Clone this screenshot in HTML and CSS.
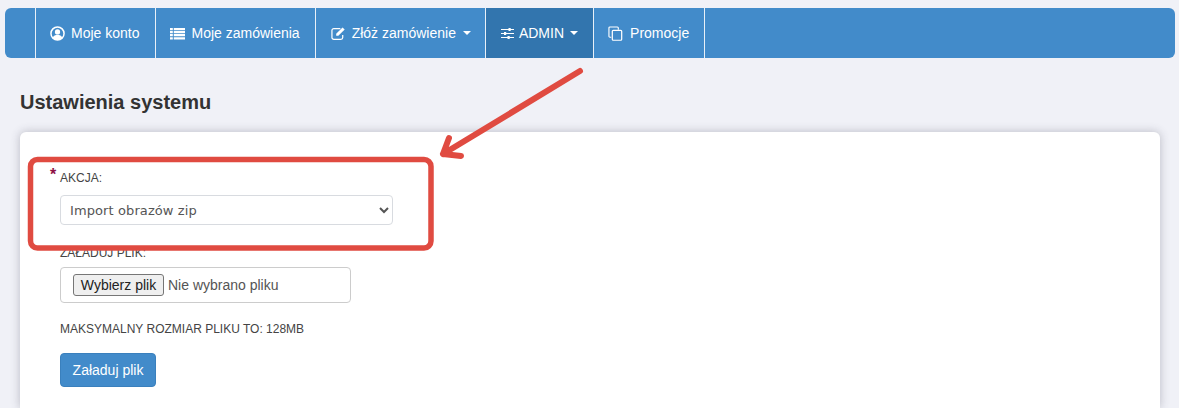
FILE: index.html
```html
<!DOCTYPE html>
<html lang="pl">
<head>
    <meta charset="UTF-8">
    <meta name="viewport" content="width=device-width, initial-scale=1.0">
    <title>Ustawienia systemu</title>
    <link rel="stylesheet" href="styles.css">
</head>
<body>
    <!-- Menu -->
    <nav class="navbar">
        <a class="nav-item nav-item-account" href="#">
            <svg class="icon" viewBox="0 0 16 16"><circle cx="8" cy="8" r="7" fill="none" stroke="#fff" stroke-width="1.600"/><circle cx="8" cy="6.300" r="2.800" fill="#fff"/><path d="M3 12.600c.7-2.300 2.800-3.200 5-3.200s4.300.9 5 3.200c-1.200 1.400-3 2.200-5 2.200s-3.800-.8-5-2.200z" fill="#fff"/></svg>
            Moje konto
        </a>
        <a class="nav-item" href="#">
            <svg class="icon" viewBox="0 0 16 16"><path d="M0 2h3v2.400H0zM4 2h12v2.400H4zM0 5.300h3v2.400H0zM4 5.300h12v2.400H4zM0 8.600h3V11H0zM4 8.600h12V11H4zM0 11.900h3v2.400H0zM4 11.900h12v2.400H4z" fill="#fff"/></svg>
            Moje zamówienia
        </a>
        <a class="nav-item nav-item-order" href="#">
            <svg class="icon" viewBox="0 0 16 16"><path d="M12.500 9.500v2.700a2 2 0 0 1-2 2H3a2 2 0 0 1-2-2V4.800a2 2 0 0 1 2-2h7" fill="none" stroke="#fff" stroke-width="1.300"/><path d="M5.500 8.200 12.300 1.500l2.300 2.300-6.800 6.700H5.500z" fill="#fff"/></svg>
            Złóż zamówienie <span class="caret"></span>
        </a>
        <a class="nav-item nav-item-tight active" href="#">
            <svg class="icon icon-small" viewBox="0 0 13 13"><path d="M0 2.500h13M0 6.500h13M0 10.500h13" stroke="#fff" stroke-width="1.100"/><path d="M7.500 1h2.200v3H7.500zM3 5h2.200v3H3zM6.500 9h2.200v3H6.500z" fill="#fff"/></svg>
            ADMIN <span class="caret"></span>
        </a>
        <a class="nav-item nav-item-promo" href="#">
            <svg class="icon" viewBox="0 0 16 16"><path d="M3.500 12H2a1 1 0 0 1-1-1V2a1 1 0 0 1 1-1h8a1 1 0 0 1 1 1v2" fill="none" stroke="#fff" stroke-width="1.200"/><rect x="4.600" y="4.600" width="10" height="10.600" rx="1" fill="none" stroke="#fff" stroke-width="1.300"/></svg>
            Promocje
        </a>
    </nav>

    <h1 class="page-title">Ustawienia systemu</h1>

    <!-- Formularz -->
    <div class="card">
        <div class="field">
            <label class="field-label required">AKCJA:</label>
            <select class="select">
                <option>Import obrazów zip</option>
            </select>
        </div>
        <div class="field">
            <label class="field-label field-label-short">ZAŁADUJ PLIK:</label>
            <div class="file-box">
                <button class="file-button" type="button">Wybierz plik</button>
                <span>Nie wybrano pliku</span>
            </div>
        </div>
        <p class="hint">MAKSYMALNY ROZMIAR PLIKU TO: 128MB</p>
        <button class="submit" type="button">Załaduj plik</button>
    </div>

    <!-- Adnotacja na zrzucie -->
    <svg class="annotation" width="1179" height="408" viewBox="0 0 1179 408">
        <rect x="30.500" y="159.500" width="400.500" height="88.500" rx="7" fill="none" stroke="#e04b41" stroke-width="5.500"/>
        <path d="M580 71 443 154M449 138l-6 16 18 2" fill="none" stroke="#e04b41" stroke-width="6" stroke-linecap="round" stroke-linejoin="round"/>
    </svg>
</body>
</html>
```

FILE: styles.css
```css
/* CSS */
body {
    font-family: "Liberation Sans", Arial, sans-serif;
    background-color: #f0f1f7;
    color: #333;
    margin: 0;
    padding: 8px 4px 0 5px;
    height: 400px;
    overflow: hidden;
    position: relative;
}

.navbar {
    display: flex;
    height: 50px;
    padding-left: 30px;
    background-color: #428bca;
    border-radius: 6px;
}

.nav-item {
    display: flex;
    align-items: center;
    gap: 6px;
    padding: 0 15px 0 14px;
    border-left: 1px solid #e8f0f8;
    color: #fff;
    font-size: 14px;
    text-decoration: none;
}

.nav-item-account {
    padding-right: 16px;
}

.nav-item-order {
    padding: 0 14px 0 15px;
}

.nav-item-tight {
    gap: 5px;
}

.nav-item-promo {
    gap: 7px;
}

.nav-item:last-child {
    border-right: 1px solid #e8f0f8;
}

.nav-item.active {
    background-color: #3275ae;
}

.icon {
    width: 15px;
    height: 15px;
    flex: none;
}

.icon-small {
    width: 13px;
    height: 13px;
    margin-left: 1px;
}

.caret {
    width: 0;
    height: 0;
    margin-left: 1px;
    border-top: 4px solid #fff;
    border-left: 4px solid transparent;
    border-right: 4px solid transparent;
}

.page-title {
    margin: 33px 0 0 15px;
    height: 41px;
    font-size: 20px;
    line-height: 22px;
    color: #333;
}

.card {
    width: 1140px;
    height: 276px;
    margin-left: 15px;
    padding: 38px 40px 0;
    box-sizing: border-box;
    background: #fff;
    border-radius: 6px 6px 0 0;
    box-shadow: 0 0 10px rgba(60, 60, 80, 0.3);
}

.field {
    margin-bottom: 20px;
}

.field:nth-child(2) {
    margin-bottom: 19px;
}

.field-label {
    display: block;
    height: 25px;
    font-size: 12px;
    line-height: 16px;
    color: #444;
}

.field-label-short {
    height: 22px;
}

.required {
    position: relative;
}

.required::before {
    content: "*";
    position: absolute;
    left: -10px;
    top: -3px;
    color: #8d1045;
    font-size: 16px;
    font-weight: bold;
}

.select {
    display: block;
    width: 333px;
    height: 30px;
    padding: 0 5px;
    background-color: #fff;
    border: 1px solid #d8dbe0;
    border-radius: 4px;
    color: #555;
    font-family: "DejaVu Sans", sans-serif;
    font-size: 13px;
    letter-spacing: 0.1px;
}

.file-box {
    display: flex;
    align-items: center;
    gap: 4px;
    width: 291px;
    height: 36px;
    padding-left: 12px;
    box-sizing: border-box;
    border: 1px solid #ccc;
    border-radius: 4px;
    color: #555;
    font-size: 14px;
}

.file-button {
    width: 91px;
    height: 22px;
    padding: 0;
    background-color: #efefef;
    border: 1px solid #767676;
    border-radius: 3px;
    color: #222;
    font-family: inherit;
    font-size: 14px;
}

.hint {
    margin: 0 0 17px;
    font-size: 12px;
    line-height: 14px;
    color: #444;
}

.submit {
    display: block;
    width: 96px;
    height: 34px;
    background-color: #428bca;
    border: 1px solid #3a80bd;
    border-radius: 4px;
    color: #fff;
    font-family: inherit;
    font-size: 14px;
}

.annotation {
    position: absolute;
    left: 0;
    top: 0;
    pointer-events: none;
}
```
